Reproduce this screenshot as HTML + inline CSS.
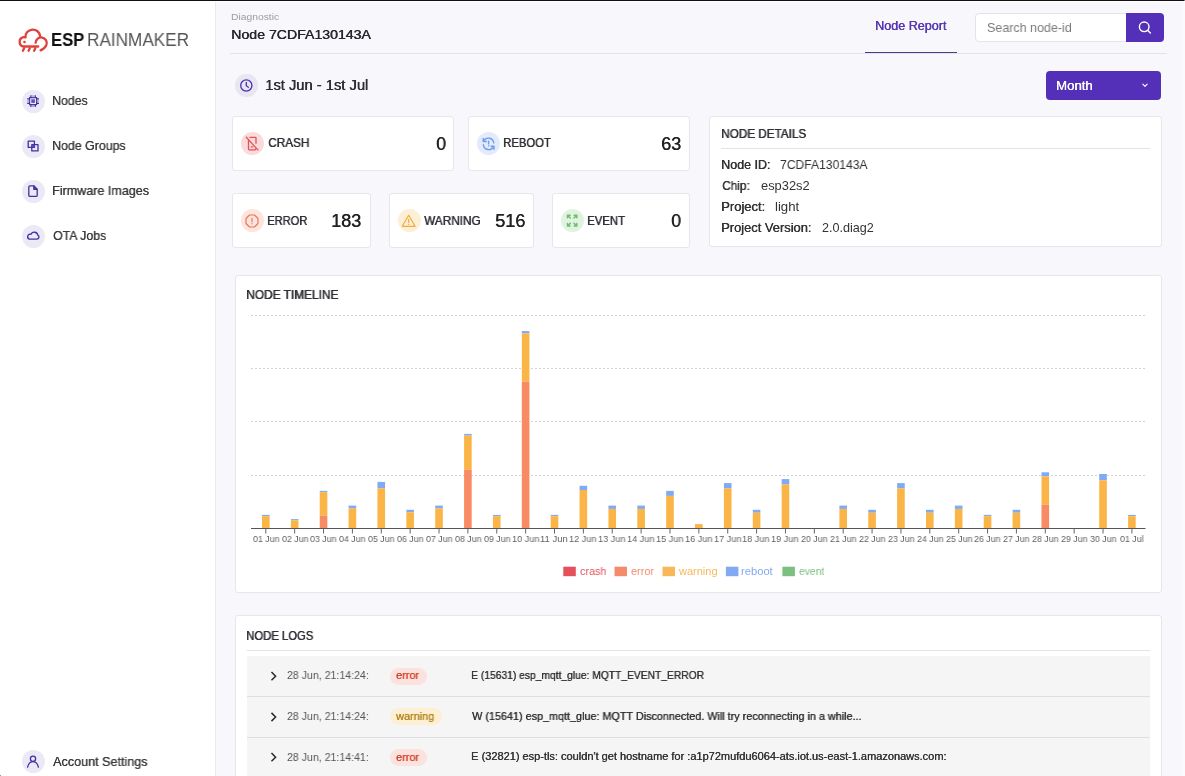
<!DOCTYPE html>
<html><head><meta charset="utf-8">
<style>
html,body{margin:0;padding:0;}
body{width:1185px;height:776px;overflow:hidden;position:relative;background:#f8f7fc;font-family:"Liberation Sans",sans-serif;}
.t{position:absolute;white-space:pre;will-change:transform;}
.a{position:absolute;box-sizing:border-box;}
.card{position:absolute;box-sizing:border-box;background:#fff;border:1px solid #e6e6ec;border-radius:3px;}
.circ{position:absolute;border-radius:50%;}
svg{position:absolute;overflow:visible;}
</style></head><body>
<!-- top dark line -->
<div class=a style="left:0;top:0;width:1184px;height:1px;background:#111;"></div>
<div class=a style="left:1184px;top:0;width:1px;height:1px;background:#777;"></div>
<div class=a style="left:0;top:1px;width:1185px;height:1px;background:#fff;"></div>
<div class=a style="left:1182px;top:2px;width:3px;height:774px;background:#fbfbfd;"></div>
<!-- sidebar -->
<div class=a style="left:0;top:2px;width:216px;height:774px;background:#fff;border-right:1px solid #e9e9ee;"></div>
<!-- logo cloud -->
<svg style="left:0;top:0" width="60" height="60" viewBox="0 0 60 60">
  <g fill="none" stroke="#e2403a" stroke-width="2.3" stroke-linecap="round" stroke-linejoin="round">
    <path d="M38.2 46.5H23.5A4.75 4.75 0 0 1 23.6 37.15H25.3"/>
    <path d="M25.45 37.4A7.35 7.35 0 0 1 40.1 36.2"/>
    <path d="M35.65 42.7A5.55 5.55 0 1 1 46.5 44.6Q45.2 48.4 40.6 50.4"/>
    <path d="M24.1 48.2L22.9 50.7M29.8 48.2L28.6 50.7M35.3 48.2L34.1 50.7"/>
  </g>
  <circle cx="24.5" cy="42" r="1.3" fill="#e2403a"/>
</svg>
<!-- nav circles -->
<div class=circ style="left:22px;top:90px;width:23px;height:23px;background:#ece9f7"></div>
<div class=circ style="left:22px;top:135px;width:23px;height:23px;background:#ece9f7"></div>
<div class=circ style="left:22px;top:180px;width:23px;height:23px;background:#ece9f7"></div>
<div class=circ style="left:22px;top:225px;width:23px;height:23px;background:#ece9f7"></div>
<div class=circ style="left:22px;top:750px;width:23px;height:23px;background:#ece9f7"></div>
<!-- nav icons -->
<svg style="left:0;top:0" width="60" height="776">
  <g fill="none" stroke="#44309f" stroke-width="1.2" stroke-linejoin="round" stroke-linecap="butt">
    <!-- chip -->
    <rect x="29.6" y="97.6" width="7" height="7"/>
    <path d="M30.9 95.2v2.4M35.3 95.2v2.4M30.9 104.6v2.4M35.3 104.6v2.4M27.2 98.9h2.4M27.2 103.3h2.4M36.6 98.9h2.4M36.6 103.3h2.4"/>
  </g>
  <g fill="#8d7fd6" opacity="0.55">
    <rect x="31.6" y="95.2" width="2.8" height="2.3"/><rect x="31.6" y="104.7" width="2.8" height="2.3"/>
    <rect x="27.2" y="99.6" width="2.3" height="3"/><rect x="36.7" y="99.6" width="2.3" height="3"/>
  </g>
  <rect x="31.3" y="99.3" width="3.6" height="3.6" fill="#6152b3"/>
  <g fill="none" stroke="#44309f" stroke-width="1.3" stroke-linejoin="round" stroke-linecap="square">
    <!-- groups -->
    <rect x="28.2" y="141.2" width="6.2" height="6.2"/>
    <rect x="31.8" y="144.7" width="6.2" height="6.2"/>
  </g>
  <rect x="31.8" y="144.7" width="2.6" height="2.7" fill="#5a47b8"/>
  <g fill="none" stroke="#44309f" stroke-width="1.3" stroke-linejoin="round" stroke-linecap="round">
    <!-- file -->
    <path d="M30 185.8h3.8l3.4 3.5v5.9a1.2 1.2 0 0 1-1.2 1.2h-6a1.2 1.2 0 0 1-1.2-1.2v-8.2a1.2 1.2 0 0 1 1.2-1.2z"/>
    <path d="M33.8 185.8v3.5h3.4"/>
    <!-- cloud -->
    <path d="M29.4 239.1h7.5a2.05 2.05 0 0 0 0.9-3.9a3.6 3.6 0 0 0-6.8-0.9a2.45 2.45 0 0 0-1.6 4.8z"/>
    <!-- user -->
    <circle cx="33" cy="758.7" r="2.6"/>
    <path d="M27.6 767.2C28.4 763.6 30.4 761.7 33 761.7S37.6 763.6 38.4 767.2"/>
  </g>
  <path d="M34.2 186.4v2.5h2.5z" fill="#44309f"/>
</svg>

<!-- header -->
<div class=a style="left:230px;top:53px;width:937px;height:1px;background:#e3e3e8"></div>
<div class=a style="left:865px;top:52px;width:92px;height:1.2px;background:#4a3c8c"></div>
<div class=a style="left:974.5px;top:12.5px;width:152px;height:29.7px;background:#fff;border:1px solid #e3e3e9;border-radius:4px 0 0 4px"></div>
<div class=a style="left:1126px;top:12.7px;width:38px;height:29.3px;background:#5430b8;border-radius:0 4px 4px 0"></div>
<svg style="left:0;top:0" width="1185" height="100">
  <g fill="none" stroke="#fff" stroke-width="1.4" stroke-linecap="round">
    <circle cx="1144.2" cy="26.8" r="4.8"/>
    <path d="M1147.8 30.4l2.6 2.6"/>
  </g>
</svg>
<!-- date -->
<div class=circ style="left:235px;top:74px;width:22.5px;height:22.5px;background:#e8e6f1"></div>
<svg style="left:0;top:0" width="300" height="100">
  <g fill="none" stroke="#4b2fb0" stroke-width="1.3" stroke-linecap="round">
    <circle cx="246.3" cy="85.5" r="5.6"/>
    <path d="M246.3 82.3v3.4l2.1 1.5"/>
  </g>
</svg>
<!-- month -->
<div class=a style="left:1046px;top:71px;width:115px;height:29px;background:#5430b8;border-radius:4px"></div>
<svg style="left:0;top:0" width="1185" height="100">
  <path d="M1142.8 84.2l2.2 2.2l2.2-2.2" fill="none" stroke="#fff" stroke-width="1.1" stroke-linecap="round" stroke-linejoin="round"/>
</svg>

<!-- stat cards -->
<div class=card style="left:232px;top:116px;width:222px;height:55px"></div>
<div class=card style="left:468px;top:116px;width:222px;height:55px"></div>
<div class=card style="left:232px;top:193px;width:139px;height:55px"></div>
<div class=card style="left:389px;top:193px;width:145px;height:55px"></div>
<div class=card style="left:552px;top:193px;width:138px;height:55px"></div>
<div class=card style="left:709px;top:116px;width:453px;height:131px"></div>
<div class=a style="left:721px;top:148px;width:429px;height:1px;background:#e2e2e8"></div>

<div class=circ style="left:240.5px;top:131.5px;width:23px;height:23px;background:#fadadb"></div>
<div class=circ style="left:477px;top:131.5px;width:23px;height:23px;background:#e3ebfb"></div>
<div class=circ style="left:240.5px;top:209px;width:23px;height:23px;background:#fde4dc"></div>
<div class=circ style="left:397.5px;top:209px;width:23px;height:23px;background:#fdefd6"></div>
<div class=circ style="left:560.5px;top:209px;width:23px;height:23px;background:#e0f3e1"></div>
<svg style="left:0;top:0" width="700" height="260">
  <!-- crash: phone with slash -->
  <g fill="none" stroke="#e25457" stroke-width="1.3" stroke-linecap="round" stroke-linejoin="round">
    <path d="M250 137.3h5.2a0.8 0.8 0 0 1 0.8 0.8v5.2 M248.5 140.5v8.6a0.8 0.8 0 0 0 0.8 0.8h5.7a0.8 0.8 0 0 0 0.8-0.8v-0.5"/>
    <path d="M246.3 137.3l11.6 12.6"/>
    <path d="M251.2 146.9h1.6"/>
  </g>
  <!-- reboot -->
  <g fill="none" stroke="#6e9cf0" stroke-width="1.4" stroke-linecap="round" stroke-linejoin="round">
    <path d="M483.2 138.5v3h3"/>
    <path d="M483.6 141.2a5.4 5.4 0 0 1 10.2 1.6"/>
    <path d="M494 149.3v-3h-3"/>
    <path d="M493.6 146.6a5.4 5.4 0 0 1-10.2-1.8"/>
    <path d="M488.6 141.3v2.6"/>
  </g>
  <circle cx="488.6" cy="145.8" r="0.7" fill="#6e9cf0"/>
  <!-- error octagon -->
  <g fill="none" stroke="#e8785c" stroke-width="1.2" stroke-linejoin="round" stroke-linecap="round">
    <path d="M249.5 215h5l3.5 3.5v5l-3.5 3.5h-5l-3.5-3.5v-5z"/>
    <path d="M252 218.4v3.4"/>
  </g>
  <circle cx="252" cy="223.7" r="0.65" fill="#e8785c"/>
  <!-- warning triangle -->
  <g fill="none" stroke="#f2ab3e" stroke-width="1.2" stroke-linejoin="round" stroke-linecap="round">
    <path d="M408.7 215.3l6.4 11h-12.8z"/>
    <path d="M408.7 219.4v3.2"/>
  </g>
  <circle cx="408.7" cy="224.4" r="0.65" fill="#f2ab3e"/>
  <!-- event arrows -->
  <g fill="none" stroke="#6cbd71" stroke-width="1.5" stroke-linecap="round" stroke-linejoin="round">
    <path d="M567.5 215.2l2.8 2.8 M567.5 215.2v2.6 M567.5 215.2h2.6"/>
    <path d="M576.8 215.2l-2.8 2.8 M576.8 215.2v2.6 M576.8 215.2h-2.6"/>
    <path d="M567.5 226l2.8-2.8 M567.5 226v-2.6 M567.5 226h2.6"/>
    <path d="M576.8 226l-2.8-2.8 M576.8 226v-2.6 M576.8 226h-2.6"/>
  </g>
</svg>

<!-- timeline card -->
<div class=card style="left:235px;top:275px;width:927px;height:318px"></div>
<svg style="left:0;top:0" width="1185" height="600"><line x1="251" y1="315.5" x2="1145.5" y2="315.5" stroke="#d2d2d2" stroke-width="1" stroke-dasharray="2,2"/><line x1="251" y1="368.5" x2="1145.5" y2="368.5" stroke="#d2d2d2" stroke-width="1" stroke-dasharray="2,2"/><line x1="251" y1="421.5" x2="1145.5" y2="421.5" stroke="#d2d2d2" stroke-width="1" stroke-dasharray="2,2"/><line x1="251" y1="475.5" x2="1145.5" y2="475.5" stroke="#d2d2d2" stroke-width="1" stroke-dasharray="2,2"/><rect x="262.00" y="514.9" width="7.6" height="1.30" fill="#7eaaf6"/><rect x="262.00" y="516.2" width="7.6" height="12.30" fill="#fbb446"/><rect x="290.87" y="519.1" width="7.6" height="1.30" fill="#7eaaf6"/><rect x="290.87" y="520.4" width="7.6" height="8.10" fill="#fbb446"/><rect x="319.74" y="490.9" width="7.6" height="1.30" fill="#7eaaf6"/><rect x="319.74" y="492.2" width="7.6" height="23.50" fill="#fbb446"/><rect x="319.74" y="515.7" width="7.6" height="12.80" fill="#f88a64"/><rect x="348.61" y="505.6" width="7.6" height="2.80" fill="#7eaaf6"/><rect x="348.61" y="508.4" width="7.6" height="20.10" fill="#fbb446"/><rect x="377.48" y="481.9" width="7.6" height="6.50" fill="#7eaaf6"/><rect x="377.48" y="488.4" width="7.6" height="40.10" fill="#fbb446"/><rect x="406.35" y="509.8" width="7.6" height="2.50" fill="#7eaaf6"/><rect x="406.35" y="512.3" width="7.6" height="16.20" fill="#fbb446"/><rect x="435.22" y="505.6" width="7.6" height="2.80" fill="#7eaaf6"/><rect x="435.22" y="508.4" width="7.6" height="20.10" fill="#fbb446"/><rect x="464.09" y="433.9" width="7.6" height="1.70" fill="#7eaaf6"/><rect x="464.09" y="435.6" width="7.6" height="34.20" fill="#fbb446"/><rect x="464.09" y="469.8" width="7.6" height="58.70" fill="#f88a64"/><rect x="492.96" y="514.9" width="7.6" height="1.30" fill="#7eaaf6"/><rect x="492.96" y="516.2" width="7.6" height="12.30" fill="#fbb446"/><rect x="521.83" y="331.1" width="7.6" height="2.30" fill="#7eaaf6"/><rect x="521.83" y="333.4" width="7.6" height="48.20" fill="#fbb446"/><rect x="521.83" y="381.6" width="7.6" height="146.90" fill="#f88a64"/><rect x="550.70" y="514.9" width="7.6" height="1.30" fill="#7eaaf6"/><rect x="550.70" y="516.2" width="7.6" height="12.30" fill="#fbb446"/><rect x="579.57" y="485.8" width="7.6" height="4.20" fill="#7eaaf6"/><rect x="579.57" y="490.0" width="7.6" height="38.50" fill="#fbb446"/><rect x="608.44" y="505.6" width="7.6" height="3.30" fill="#7eaaf6"/><rect x="608.44" y="508.9" width="7.6" height="19.60" fill="#fbb446"/><rect x="637.31" y="505.6" width="7.6" height="3.30" fill="#7eaaf6"/><rect x="637.31" y="508.9" width="7.6" height="19.60" fill="#fbb446"/><rect x="666.18" y="490.9" width="7.6" height="5.00" fill="#7eaaf6"/><rect x="666.18" y="495.9" width="7.6" height="32.60" fill="#fbb446"/><rect x="695.05" y="524.1" width="7.6" height="4.40" fill="#fbb446"/><rect x="723.92" y="483.1" width="7.6" height="5.30" fill="#7eaaf6"/><rect x="723.92" y="488.4" width="7.6" height="40.10" fill="#fbb446"/><rect x="752.79" y="509.8" width="7.6" height="2.90" fill="#7eaaf6"/><rect x="752.79" y="512.7" width="7.6" height="15.80" fill="#fbb446"/><rect x="781.66" y="479.1" width="7.6" height="5.40" fill="#7eaaf6"/><rect x="781.66" y="484.5" width="7.6" height="44.00" fill="#fbb446"/><rect x="839.40" y="505.6" width="7.6" height="3.30" fill="#7eaaf6"/><rect x="839.40" y="508.9" width="7.6" height="19.60" fill="#fbb446"/><rect x="868.27" y="509.8" width="7.6" height="2.90" fill="#7eaaf6"/><rect x="868.27" y="512.7" width="7.6" height="15.80" fill="#fbb446"/><rect x="897.14" y="483.1" width="7.6" height="5.30" fill="#7eaaf6"/><rect x="897.14" y="488.4" width="7.6" height="40.10" fill="#fbb446"/><rect x="926.01" y="509.8" width="7.6" height="2.90" fill="#7eaaf6"/><rect x="926.01" y="512.7" width="7.6" height="15.80" fill="#fbb446"/><rect x="954.88" y="505.6" width="7.6" height="3.30" fill="#7eaaf6"/><rect x="954.88" y="508.9" width="7.6" height="19.60" fill="#fbb446"/><rect x="983.75" y="514.9" width="7.6" height="1.30" fill="#7eaaf6"/><rect x="983.75" y="516.2" width="7.6" height="12.30" fill="#fbb446"/><rect x="1012.62" y="509.8" width="7.6" height="2.90" fill="#7eaaf6"/><rect x="1012.62" y="512.7" width="7.6" height="15.80" fill="#fbb446"/><rect x="1041.49" y="472.3" width="7.6" height="4.10" fill="#7eaaf6"/><rect x="1041.49" y="476.4" width="7.6" height="28.30" fill="#fbb446"/><rect x="1041.49" y="504.7" width="7.6" height="23.80" fill="#f88a64"/><rect x="1099.23" y="474.0" width="7.6" height="6.30" fill="#7eaaf6"/><rect x="1099.23" y="480.3" width="7.6" height="48.20" fill="#fbb446"/><rect x="1128.10" y="514.9" width="7.6" height="1.30" fill="#7eaaf6"/><rect x="1128.10" y="516.2" width="7.6" height="12.30" fill="#fbb446"/><line x1="251" y1="528.5" x2="1145.5" y2="528.5" stroke="#555" stroke-width="1.2"/><line x1="265.80" y1="528.5" x2="265.80" y2="533.5" stroke="#666" stroke-width="1"/><line x1="294.67" y1="528.5" x2="294.67" y2="533.5" stroke="#666" stroke-width="1"/><line x1="323.54" y1="528.5" x2="323.54" y2="533.5" stroke="#666" stroke-width="1"/><line x1="352.41" y1="528.5" x2="352.41" y2="533.5" stroke="#666" stroke-width="1"/><line x1="381.28" y1="528.5" x2="381.28" y2="533.5" stroke="#666" stroke-width="1"/><line x1="410.15" y1="528.5" x2="410.15" y2="533.5" stroke="#666" stroke-width="1"/><line x1="439.02" y1="528.5" x2="439.02" y2="533.5" stroke="#666" stroke-width="1"/><line x1="467.89" y1="528.5" x2="467.89" y2="533.5" stroke="#666" stroke-width="1"/><line x1="496.76" y1="528.5" x2="496.76" y2="533.5" stroke="#666" stroke-width="1"/><line x1="525.63" y1="528.5" x2="525.63" y2="533.5" stroke="#666" stroke-width="1"/><line x1="554.50" y1="528.5" x2="554.50" y2="533.5" stroke="#666" stroke-width="1"/><line x1="583.37" y1="528.5" x2="583.37" y2="533.5" stroke="#666" stroke-width="1"/><line x1="612.24" y1="528.5" x2="612.24" y2="533.5" stroke="#666" stroke-width="1"/><line x1="641.11" y1="528.5" x2="641.11" y2="533.5" stroke="#666" stroke-width="1"/><line x1="669.98" y1="528.5" x2="669.98" y2="533.5" stroke="#666" stroke-width="1"/><line x1="698.85" y1="528.5" x2="698.85" y2="533.5" stroke="#666" stroke-width="1"/><line x1="727.72" y1="528.5" x2="727.72" y2="533.5" stroke="#666" stroke-width="1"/><line x1="756.59" y1="528.5" x2="756.59" y2="533.5" stroke="#666" stroke-width="1"/><line x1="785.46" y1="528.5" x2="785.46" y2="533.5" stroke="#666" stroke-width="1"/><line x1="814.33" y1="528.5" x2="814.33" y2="533.5" stroke="#666" stroke-width="1"/><line x1="843.20" y1="528.5" x2="843.20" y2="533.5" stroke="#666" stroke-width="1"/><line x1="872.07" y1="528.5" x2="872.07" y2="533.5" stroke="#666" stroke-width="1"/><line x1="900.94" y1="528.5" x2="900.94" y2="533.5" stroke="#666" stroke-width="1"/><line x1="929.81" y1="528.5" x2="929.81" y2="533.5" stroke="#666" stroke-width="1"/><line x1="958.68" y1="528.5" x2="958.68" y2="533.5" stroke="#666" stroke-width="1"/><line x1="987.55" y1="528.5" x2="987.55" y2="533.5" stroke="#666" stroke-width="1"/><line x1="1016.42" y1="528.5" x2="1016.42" y2="533.5" stroke="#666" stroke-width="1"/><line x1="1045.29" y1="528.5" x2="1045.29" y2="533.5" stroke="#666" stroke-width="1"/><line x1="1074.16" y1="528.5" x2="1074.16" y2="533.5" stroke="#666" stroke-width="1"/><line x1="1103.03" y1="528.5" x2="1103.03" y2="533.5" stroke="#666" stroke-width="1"/><line x1="1131.90" y1="528.5" x2="1131.90" y2="533.5" stroke="#666" stroke-width="1"/><rect x="563.3" y="566.7" width="12.5" height="9.5" fill="#e6505b"/><rect x="614.5" y="566.7" width="12.5" height="9.5" fill="#f58b6b"/><rect x="662.5" y="566.7" width="12.5" height="9.5" fill="#f8b85a"/><rect x="725.9" y="566.7" width="12.5" height="9.5" fill="#82a9f2"/><rect x="782.4" y="566.7" width="12.5" height="9.5" fill="#7dbf80"/></svg>

<!-- logs card -->
<div class=card style="left:235px;top:615px;width:927px;height:200px"></div>
<div class=a style="left:247px;top:650px;width:903px;height:1px;background:#e2e2e8"></div>
<div class=a style="left:247px;top:656px;width:903px;height:41px;background:#f5f5f5;border-bottom:1px solid #dedede"></div>
<div class=a style="left:247px;top:697px;width:903px;height:41px;background:#f5f5f5;border-bottom:1px solid #dedede"></div>
<div class=a style="left:247px;top:738px;width:903px;height:40px;background:#f5f5f5;"></div>
<div class=a style="left:389.5px;top:667.5px;width:37.5px;height:17px;background:#fbe2de;border-radius:9px"></div>
<div class=a style="left:389.5px;top:708px;width:52px;height:17px;background:#fcefd4;border-radius:9px"></div>
<div class=a style="left:389.5px;top:748.5px;width:37.5px;height:17px;background:#fbe2de;border-radius:9px"></div>
<svg style="left:0;top:0" width="300" height="776">
  <g fill="none" stroke="#2a2a2a" stroke-width="1.5" stroke-linecap="square">
    <path d="M272 672.6l3.6 3.6l-3.6 3.6"/>
    <path d="M272 713.4l3.6 3.6l-3.6 3.6"/>
    <path d="M272 753.6l3.6 3.6l-3.6 3.6"/>
  </g>
</svg>
<div class=a style="left:0;top:775px;width:1px;height:1px;background:#999"></div>
<span class=t style='left:51.25px;top:32px;font-size:17.5px;line-height:17.5px;font-weight:700;color:#111;transform:scaleX(0.9515);transform-origin:0 0;'>ESP</span>
<span class=t style='left:86.62px;top:32px;font-size:17.5px;line-height:17.5px;font-weight:400;color:#555;transform:scaleX(0.9804);transform-origin:0 0;'>RAINMAKER</span>
<span class=t style='left:51.83px;top:95px;font-size:12.7px;line-height:12.7px;font-weight:400;text-shadow:0.15px 0 0 #3a3a3a;color:#3a3a3a;transform:scaleX(0.9722);transform-origin:0 0;'>Nodes</span>
<span class=t style='left:51.92px;top:140px;font-size:12.7px;line-height:12.7px;font-weight:400;text-shadow:0.15px 0 0 #3a3a3a;color:#3a3a3a;transform:scaleX(0.9757);transform-origin:0 0;'>Node Groups</span>
<span class=t style='left:51.91px;top:185px;font-size:12.7px;line-height:12.7px;font-weight:400;text-shadow:0.15px 0 0 #3a3a3a;color:#3a3a3a;transform:scaleX(0.9897);transform-origin:0 0;'>Firmware Images</span>
<span class=t style='left:52.90px;top:230px;font-size:12.7px;line-height:12.7px;font-weight:400;text-shadow:0.15px 0 0 #3a3a3a;color:#3a3a3a;transform:scaleX(0.9709);transform-origin:0 0;'>OTA Jobs</span>
<span class=t style='left:52.80px;top:756px;font-size:12.7px;line-height:12.7px;font-weight:400;text-shadow:0.15px 0 0 #3a3a3a;color:#3a3a3a;transform:scaleX(0.9926);transform-origin:0 0;'>Account Settings</span>
<span class=t style='left:231.29px;top:13px;font-size:9.3px;line-height:9.3px;font-weight:400;color:#9b9b9b;transform:scaleX(1.1095);transform-origin:0 0;'>Diagnostic</span>
<span class=t style='left:231.34px;top:28px;font-size:13.3px;line-height:13.3px;font-weight:400;text-shadow:0.55px 0 0 #26262e;color:#26262e;transform:scaleX(1.0611);transform-origin:0 0;'>Node 7CDFA130143A</span>
<span class=t style='left:874.79px;top:20px;font-size:12.4px;line-height:12.4px;font-weight:400;text-shadow:0.4px 0 0 #5636b2;color:#5636b2;transform:scaleX(1.0143);transform-origin:0 0;'>Node Report</span>
<span class=t style='left:986.72px;top:22px;font-size:12.8px;line-height:12.8px;font-weight:400;color:#7a7a7a;transform:scaleX(0.9765);transform-origin:0 0;'>Search node-id</span>
<span class=t style='left:265.15px;top:78px;font-size:14px;line-height:14px;font-weight:400;text-shadow:0.5px 0 0 #2d2d33;color:#2d2d33;transform:scaleX(1.0515);transform-origin:0 0;'>1st Jun - 1st Jul</span>
<span class=t style='left:1056.36px;top:80px;font-size:12.6px;line-height:12.6px;font-weight:400;text-shadow:0.35px 0 0 #ffffff;color:#ffffff;transform:scaleX(1.0441);transform-origin:0 0;'>Month</span>
<span class=t style='left:267.50px;top:137px;font-size:12.8px;line-height:12.8px;font-weight:400;text-shadow:0.5px 0 0 #2f2f35;color:#2f2f35;transform:scaleX(0.9205);transform-origin:0 0;'>CRASH</span>
<span class=t style='left:435.62px;top:135px;font-size:18px;line-height:18px;font-weight:400;text-shadow:0.45px 0 0 #222;color:#222;transform:scaleX(0.9778);transform-origin:0 0;'>0</span>
<span class=t style='left:502.82px;top:137px;font-size:12.8px;line-height:12.8px;font-weight:400;text-shadow:0.5px 0 0 #2f2f35;color:#2f2f35;transform:scaleX(0.8811);transform-origin:0 0;'>REBOOT</span>
<span class=t style='left:661.30px;top:135px;font-size:18px;line-height:18px;font-weight:400;text-shadow:0.45px 0 0 #222;color:#222;'>63</span>
<span class=t style='left:266.63px;top:215px;font-size:12.8px;line-height:12.8px;font-weight:400;text-shadow:0.5px 0 0 #2f2f35;color:#2f2f35;transform:scaleX(0.8689);transform-origin:0 0;'>ERROR</span>
<span class=t style='left:331.30px;top:212px;font-size:18px;line-height:18px;font-weight:400;text-shadow:0.45px 0 0 #222;color:#222;'>183</span>
<span class=t style='left:424.20px;top:215px;font-size:12.8px;line-height:12.8px;font-weight:400;text-shadow:0.5px 0 0 #2f2f35;color:#2f2f35;transform:scaleX(0.9180);transform-origin:0 0;'>WARNING</span>
<span class=t style='left:494.99px;top:212px;font-size:18px;line-height:18px;font-weight:400;text-shadow:0.45px 0 0 #222;color:#222;transform:scaleX(1.0069);transform-origin:0 0;'>516</span>
<span class=t style='left:586.81px;top:215px;font-size:12.8px;line-height:12.8px;font-weight:400;text-shadow:0.5px 0 0 #2f2f35;color:#2f2f35;transform:scaleX(0.8881);transform-origin:0 0;'>EVENT</span>
<span class=t style='left:671.22px;top:212px;font-size:18px;line-height:18px;font-weight:400;text-shadow:0.45px 0 0 #222;color:#222;transform:scaleX(0.9778);transform-origin:0 0;'>0</span>
<span class=t style='left:720.66px;top:128px;font-size:12.4px;line-height:12.4px;font-weight:400;text-shadow:0.6px 0 0 #2f2f35;color:#2f2f35;transform:scaleX(0.9438);transform-origin:0 0;'>NODE DETAILS</span>
<span class=t style='left:720.59px;top:159px;font-size:12.4px;line-height:12.4px;font-weight:400;text-shadow:0.4px 0 0 #333;color:#333;transform:scaleX(1.0085);transform-origin:0 0;'>Node ID:</span>
<span class=t style='left:780.40px;top:159px;font-size:12.4px;line-height:12.4px;font-weight:400;color:#333;transform:scaleX(0.9778);transform-origin:0 0;'>7CDFA130143A</span>
<span class=t style='left:721.60px;top:180px;font-size:12.4px;line-height:12.4px;font-weight:400;text-shadow:0.4px 0 0 #333;color:#333;transform:scaleX(0.9517);transform-origin:0 0;'>Chip:</span>
<span class=t style='left:760.90px;top:180px;font-size:12.4px;line-height:12.4px;font-weight:400;color:#333;transform:scaleX(1.0391);transform-origin:0 0;'>esp32s2</span>
<span class=t style='left:720.55px;top:201px;font-size:12.4px;line-height:12.4px;font-weight:400;text-shadow:0.4px 0 0 #333;color:#333;transform:scaleX(1.0488);transform-origin:0 0;'>Project:</span>
<span class=t style='left:774.64px;top:201px;font-size:12.4px;line-height:12.4px;font-weight:400;color:#333;transform:scaleX(1.0636);transform-origin:0 0;'>light</span>
<span class=t style='left:720.56px;top:222px;font-size:12.4px;line-height:12.4px;font-weight:400;text-shadow:0.4px 0 0 #333;color:#333;transform:scaleX(1.0400);transform-origin:0 0;'>Project Version:</span>
<span class=t style='left:821.90px;top:222px;font-size:12.4px;line-height:12.4px;font-weight:400;color:#333;transform:scaleX(1.0160);transform-origin:0 0;'>2.0.diag2</span>
<span class=t style='left:246.24px;top:289px;font-size:12.4px;line-height:12.4px;font-weight:400;text-shadow:0.6px 0 0 #2f2f35;color:#2f2f35;transform:scaleX(0.9579);transform-origin:0 0;'>NODE TIMELINE</span>
<span class=t style='left:246.39px;top:630px;font-size:12.4px;line-height:12.4px;font-weight:400;text-shadow:0.6px 0 0 #2f2f35;color:#2f2f35;transform:scaleX(0.9096);transform-origin:0 0;'>NODE LOGS</span>
<span class=t style='left:286.70px;top:670px;font-size:11px;line-height:11px;font-weight:400;color:#555;transform:scaleX(0.9619);transform-origin:0 0;'>28 Jun, 21:14:24:</span>
<span class=t style='left:471.07px;top:670px;font-size:11px;line-height:11px;font-weight:400;text-shadow:0.35px 0 0 #333;color:#333;transform:scaleX(0.9339);transform-origin:0 0;'>E (15631) esp_mqtt_glue: MQTT_EVENT_ERROR</span>
<span class=t style='left:396.40px;top:670px;font-size:11px;line-height:11px;font-weight:400;text-shadow:0.3px 0 0 #d4452e;color:#d4452e;transform:scaleX(0.9826);transform-origin:0 0;'>error</span>
<span class=t style='left:286.70px;top:711px;font-size:11px;line-height:11px;font-weight:400;color:#555;transform:scaleX(0.9619);transform-origin:0 0;'>28 Jun, 21:14:24:</span>
<span class=t style='left:472.00px;top:711px;font-size:11px;line-height:11px;font-weight:400;text-shadow:0.35px 0 0 #333;color:#333;transform:scaleX(0.9818);transform-origin:0 0;'>W (15641) esp_mqtt_glue: MQTT Disconnected. Will try reconnecting in a while...</span>
<span class=t style='left:396.40px;top:711px;font-size:11px;line-height:11px;font-weight:400;text-shadow:0.3px 0 0 #b3861c;color:#b3861c;transform:scaleX(0.9868);transform-origin:0 0;'>warning</span>
<span class=t style='left:286.70px;top:752px;font-size:11px;line-height:11px;font-weight:400;color:#555;transform:scaleX(0.9619);transform-origin:0 0;'>28 Jun, 21:14:41:</span>
<span class=t style='left:471.00px;top:751px;font-size:11px;line-height:11px;font-weight:400;text-shadow:0.35px 0 0 #333;color:#333;'>E (32821) esp-tls: couldn&#39;t get hostname for :a1p72mufdu6064-ats.iot.us-east-1.amazonaws.com:</span>
<span class=t style='left:396.40px;top:752px;font-size:11px;line-height:11px;font-weight:400;text-shadow:0.3px 0 0 #d4452e;color:#d4452e;transform:scaleX(0.9826);transform-origin:0 0;'>error</span>
<span class=t style='left:579.80px;top:566px;font-size:11px;line-height:11px;font-weight:400;color:#e6505b;transform:scaleX(0.9808);transform-origin:0 0;'>crash</span>
<span class=t style='left:631.00px;top:566px;font-size:11px;line-height:11px;font-weight:400;color:#f58b6b;transform:scaleX(0.9913);transform-origin:0 0;'>error</span>
<span class=t style='left:679.00px;top:566px;font-size:11px;line-height:11px;font-weight:400;color:#f8b85a;'>warning</span>
<span class=t style='left:741.38px;top:566px;font-size:11px;line-height:11px;font-weight:400;color:#82a9f2;transform:scaleX(1.0167);transform-origin:0 0;'>reboot</span>
<span class=t style='left:798.90px;top:566px;font-size:11px;line-height:11px;font-weight:400;color:#7dbf80;transform:scaleX(0.9444);transform-origin:0 0;'>event</span>
<span class=t style='left:252.65px;top:534px;font-size:9.4px;line-height:9.4px;font-weight:400;color:#606060;transform:scaleX(0.9393);transform-origin:0 0;'>01 Jun</span>
<span class=t style='left:281.52px;top:534px;font-size:9.4px;line-height:9.4px;font-weight:400;color:#606060;transform:scaleX(0.9393);transform-origin:0 0;'>02 Jun</span>
<span class=t style='left:310.39px;top:534px;font-size:9.4px;line-height:9.4px;font-weight:400;color:#606060;transform:scaleX(0.9393);transform-origin:0 0;'>03 Jun</span>
<span class=t style='left:339.26px;top:534px;font-size:9.4px;line-height:9.4px;font-weight:400;color:#606060;transform:scaleX(0.9393);transform-origin:0 0;'>04 Jun</span>
<span class=t style='left:368.13px;top:534px;font-size:9.4px;line-height:9.4px;font-weight:400;color:#606060;transform:scaleX(0.9393);transform-origin:0 0;'>05 Jun</span>
<span class=t style='left:397.00px;top:534px;font-size:9.4px;line-height:9.4px;font-weight:400;color:#606060;transform:scaleX(0.9393);transform-origin:0 0;'>06 Jun</span>
<span class=t style='left:425.87px;top:534px;font-size:9.4px;line-height:9.4px;font-weight:400;color:#606060;transform:scaleX(0.9393);transform-origin:0 0;'>07 Jun</span>
<span class=t style='left:454.74px;top:534px;font-size:9.4px;line-height:9.4px;font-weight:400;color:#606060;transform:scaleX(0.9393);transform-origin:0 0;'>08 Jun</span>
<span class=t style='left:483.61px;top:534px;font-size:9.4px;line-height:9.4px;font-weight:400;color:#606060;transform:scaleX(0.9393);transform-origin:0 0;'>09 Jun</span>
<span class=t style='left:511.51px;top:534px;font-size:9.4px;line-height:9.4px;font-weight:400;color:#606060;transform:scaleX(0.9741);transform-origin:0 0;'>10 Jun</span>
<span class=t style='left:540.34px;top:534px;font-size:9.4px;line-height:9.4px;font-weight:400;color:#606060;transform:scaleX(1.0115);transform-origin:0 0;'>11 Jun</span>
<span class=t style='left:569.25px;top:534px;font-size:9.4px;line-height:9.4px;font-weight:400;color:#606060;transform:scaleX(0.9741);transform-origin:0 0;'>12 Jun</span>
<span class=t style='left:598.12px;top:534px;font-size:9.4px;line-height:9.4px;font-weight:400;color:#606060;transform:scaleX(0.9741);transform-origin:0 0;'>13 Jun</span>
<span class=t style='left:626.99px;top:534px;font-size:9.4px;line-height:9.4px;font-weight:400;color:#606060;transform:scaleX(0.9741);transform-origin:0 0;'>14 Jun</span>
<span class=t style='left:655.86px;top:534px;font-size:9.4px;line-height:9.4px;font-weight:400;color:#606060;transform:scaleX(0.9741);transform-origin:0 0;'>15 Jun</span>
<span class=t style='left:684.73px;top:534px;font-size:9.4px;line-height:9.4px;font-weight:400;color:#606060;transform:scaleX(0.9741);transform-origin:0 0;'>16 Jun</span>
<span class=t style='left:713.60px;top:534px;font-size:9.4px;line-height:9.4px;font-weight:400;color:#606060;transform:scaleX(0.9741);transform-origin:0 0;'>17 Jun</span>
<span class=t style='left:742.47px;top:534px;font-size:9.4px;line-height:9.4px;font-weight:400;color:#606060;transform:scaleX(0.9741);transform-origin:0 0;'>18 Jun</span>
<span class=t style='left:771.34px;top:534px;font-size:9.4px;line-height:9.4px;font-weight:400;color:#606060;transform:scaleX(0.9741);transform-origin:0 0;'>19 Jun</span>
<span class=t style='left:801.18px;top:534px;font-size:9.4px;line-height:9.4px;font-weight:400;color:#606060;transform:scaleX(0.9393);transform-origin:0 0;'>20 Jun</span>
<span class=t style='left:830.05px;top:534px;font-size:9.4px;line-height:9.4px;font-weight:400;color:#606060;transform:scaleX(0.9393);transform-origin:0 0;'>21 Jun</span>
<span class=t style='left:858.92px;top:534px;font-size:9.4px;line-height:9.4px;font-weight:400;color:#606060;transform:scaleX(0.9393);transform-origin:0 0;'>22 Jun</span>
<span class=t style='left:887.79px;top:534px;font-size:9.4px;line-height:9.4px;font-weight:400;color:#606060;transform:scaleX(0.9393);transform-origin:0 0;'>23 Jun</span>
<span class=t style='left:916.66px;top:534px;font-size:9.4px;line-height:9.4px;font-weight:400;color:#606060;transform:scaleX(0.9393);transform-origin:0 0;'>24 Jun</span>
<span class=t style='left:945.53px;top:534px;font-size:9.4px;line-height:9.4px;font-weight:400;color:#606060;transform:scaleX(0.9393);transform-origin:0 0;'>25 Jun</span>
<span class=t style='left:974.40px;top:534px;font-size:9.4px;line-height:9.4px;font-weight:400;color:#606060;transform:scaleX(0.9393);transform-origin:0 0;'>26 Jun</span>
<span class=t style='left:1003.27px;top:534px;font-size:9.4px;line-height:9.4px;font-weight:400;color:#606060;transform:scaleX(0.9393);transform-origin:0 0;'>27 Jun</span>
<span class=t style='left:1032.14px;top:534px;font-size:9.4px;line-height:9.4px;font-weight:400;color:#606060;transform:scaleX(0.9393);transform-origin:0 0;'>28 Jun</span>
<span class=t style='left:1061.01px;top:534px;font-size:9.4px;line-height:9.4px;font-weight:400;color:#606060;transform:scaleX(0.9393);transform-origin:0 0;'>29 Jun</span>
<span class=t style='left:1089.88px;top:534px;font-size:9.4px;line-height:9.4px;font-weight:400;color:#606060;transform:scaleX(0.9393);transform-origin:0 0;'>30 Jun</span>
<span class=t style='left:1120.15px;top:534px;font-size:9.4px;line-height:9.4px;font-weight:400;color:#606060;transform:scaleX(0.9400);transform-origin:0 0;'>01 Jul</span>
</body></html>
